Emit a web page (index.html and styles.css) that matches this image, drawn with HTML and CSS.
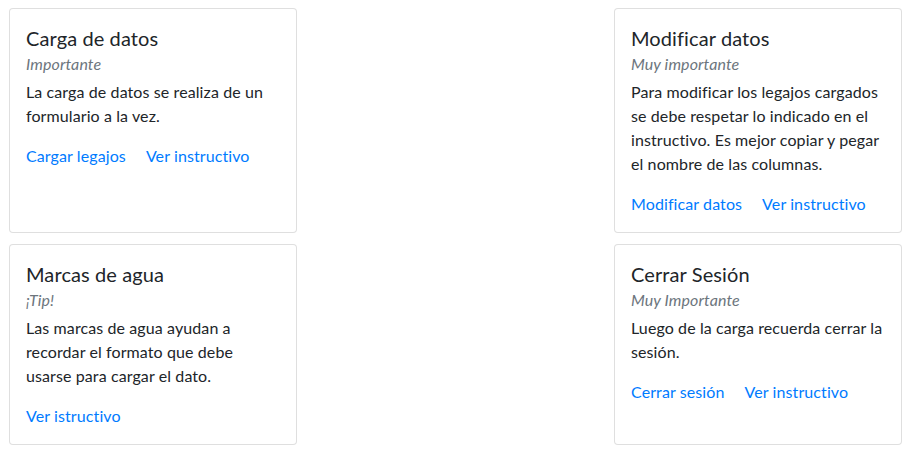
FILE: index.html
```html
<!DOCTYPE html>
<html lang="es">
<head>
<meta charset="utf-8">
<title>Ayuda</title>
<link rel="stylesheet" href="styles.css">
</head>
<body>
<main class="grid">
  <section class="card col-left">
    <div class="card-body">
      <h5 class="card-title">Carga de datos</h5>
      <h6 class="card-subtitle">Importante</h6>
      <p class="card-text">La carga de datos se realiza de un formulario a la vez.</p>
      <div class="links"><a href="#" class="card-link">Cargar legajos</a><a href="#" class="card-link">Ver instructivo</a></div>
    </div>
  </section>
  <section class="card col-right">
    <div class="card-body">
      <h5 class="card-title">Modificar datos</h5>
      <h6 class="card-subtitle">Muy importante</h6>
      <p class="card-text">Para modificar los legajos cargados se debe respetar lo indicado en el instructivo. Es mejor copiar y pegar el nombre de las columnas.</p>
      <div class="links"><a href="#" class="card-link">Modificar datos</a><a href="#" class="card-link">Ver instructivo</a></div>
    </div>
  </section>
  <section class="card col-left">
    <div class="card-body">
      <h5 class="card-title">Marcas de agua</h5>
      <h6 class="card-subtitle">¡Tip!</h6>
      <p class="card-text">Las marcas de agua ayudan a recordar el formato que debe usarse para cargar el dato.</p>
      <div class="links"><a href="#" class="card-link">Ver istructivo</a></div>
    </div>
  </section>
  <section class="card col-right">
    <div class="card-body">
      <h5 class="card-title">Cerrar Sesión</h5>
      <h6 class="card-subtitle">Muy Importante</h6>
      <p class="card-text">Luego de la carga recuerda cerrar la sesión.</p>
      <div class="links"><a href="#" class="card-link">Cerrar sesión</a><a href="#" class="card-link">Ver instructivo</a></div>
    </div>
  </section>
</main>
</body>
</html>
```
FILE: styles.css
```css
* { box-sizing: border-box; }
html, body { margin: 0; padding: 0; background: #fff; }
body {
  font-family: "Lato", "Noto Sans", sans-serif;
  font-size: 16px;
  line-height: 1.5;
  letter-spacing: 0.1px;
  color: #212529;
}
.grid {
  display: grid;
  grid-template-columns: 288px 1fr 288px;
  row-gap: 11px;
  padding: 8px 16px 0 9px;
}
.col-left { grid-column: 1; }
.col-right { grid-column: 3; }
.card {
  border: 1px solid rgba(0, 0, 0, 0.125);
  border-radius: 4px;
  background: #fff;
  display: flex;
  flex-direction: column;
}
.card-body { padding: 16px; }
.card-title {
  margin: 1px 0 10px;
  font-size: 20px;
  font-weight: 400;
  line-height: 24px;
}
.card-subtitle {
  margin: -6px 0 7px;
  font-size: 16px;
  font-weight: 400;
  font-style: italic;
  line-height: 19px;
  color: #6c757d;
}
.card-text { margin: 0 0 16px; }
.links { display: flex; gap: 20px; }
.card-link { color: #007bff; text-decoration: none; }
```
